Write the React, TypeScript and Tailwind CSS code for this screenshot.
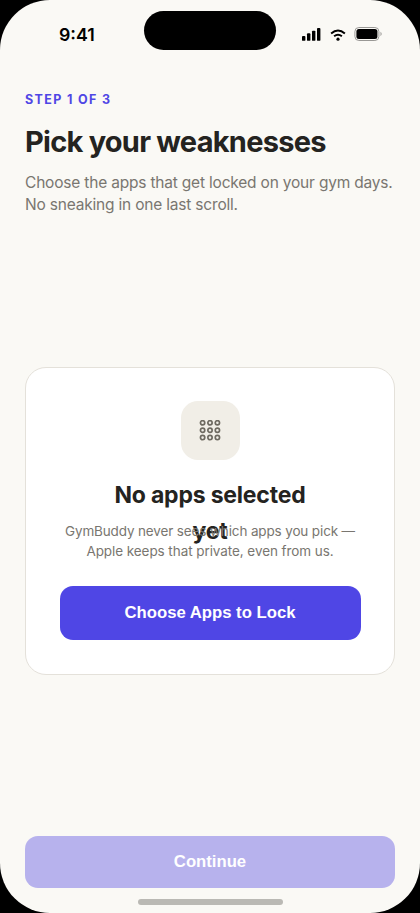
const dots = [2.8, 10.2, 17.6];

function StatusIcons() {
  return (
    <div className="flex h-[14px] items-center" aria-label="Signal, Wi-Fi and battery">
      <svg width="20" height="14" viewBox="0 0 20 14" fill="#000">
        <rect x="0" y="9" width="3.4" height="4.8" rx=".9" />
        <rect x="5" y="6.3" width="3.4" height="7.5" rx=".9" />
        <rect x="10" y="3.7" width="3.4" height="10.1" rx=".9" />
        <rect x="15" y="1" width="3.4" height="12.8" rx=".9" />
      </svg>
      <svg className="ml-[8px]" width="16" height="14" viewBox="0 0 16 14" fill="none" stroke="#000" strokeWidth="1.9">
        <path d="M1.1 6.5Q8 .3 14.9 6.5M4.1 9.3Q8 6.1 11.9 9.3" />
        <circle cx="8" cy="12.2" r="1.6" fill="#000" stroke="none" />
      </svg>
      <svg className="ml-[8px]" width="29" height="14" viewBox="0 0 29 14">
        <rect x=".9" y=".5" width="24" height="13" rx="4" fill="none" stroke="#999895" />
        <rect x="2.4" y="2" width="21" height="10" rx="2.5" fill="#000" />
        <path d="M26.5 4.8q2.4 2.2 0 4.4z" fill="#999895" />
      </svg>
    </div>
  );
}

export default function App() {
  return (
    <div className="h-[913px] w-[420px] overflow-hidden bg-black font-['Inter',sans-serif] text-[#242320]">
      <main className="flex h-full flex-col overflow-hidden rounded-[50px] bg-[#faf9f5]">
        <header className="flex h-[62px] shrink-0 pl-[59px] text-black">
          <time className="mt-[24px] w-[85px] text-[17.75px] leading-[22px] font-semibold">9:41</time>
          <div className="mt-[11px] h-[39px] w-[132px] rounded-full bg-black" />
          <div className="mt-[27px] ml-[26px]"><StatusIcons /></div>
        </header>

        <section className="mt-[30px] h-[124px] shrink-0 pl-[25px]">
          <p className="text-[12.5px] leading-[16px] font-bold tracking-[1.35px] text-[#4f46e5]">STEP 1 OF 3</p>
          <h1 className="mt-[16px] text-[29px] leading-[36px] font-bold tracking-[-0.75px] whitespace-nowrap">Pick your weaknesses</h1>
          <p className="mt-[12px] text-[15.5px] leading-[22px] tracking-[-0.195px] whitespace-nowrap text-[#797670]">
            Choose the apps that get locked on your gym days.<br />No sneaking in one last scroll.
          </p>
        </section>

        <section className="mx-[25px] mt-[151px] flex h-[308px] shrink-0 flex-col items-center rounded-[21px] border border-[#e4e1da] bg-white">
          <div className="mt-[33px] flex h-[59px] w-[59px] shrink-0 items-center justify-center rounded-[17px] bg-[#f1eee7]">
            <svg width="22" height="21" viewBox="-.8 0 22 21" fill="none" stroke="#6e6a61" strokeWidth="1.7">
              {dots.flatMap((y) => dots.map((x) => <circle key={`${x}-${y}`} cx={x} cy={y} r="2.15" />))}
            </svg>
          </div>
          <h2 className="mt-[17px] h-[45px] w-[210px] shrink-0 text-center text-[23px] leading-[36px] font-bold tracking-[-0.2px]">No apps selected yet</h2>
          <p className="relative -mt-px text-center text-[13.5px] leading-[20px] tracking-[-0.14px] whitespace-nowrap text-[#797670]">
            GymBuddy never sees which apps you pick —<br /><span className="tracking-[-0.07px]">Apple keeps that private, even from us.</span>
          </p>
          <button className="mt-[25px] h-[54px] w-[301px] shrink-0 rounded-[13px] bg-[#4f46e5] font-['Liberation_Sans',sans-serif] text-[16.7px] font-bold text-white">Choose Apps to Lock</button>
        </section>

        <footer className="mt-auto flex flex-col items-center pb-[8px]">
          <button className="h-[52px] w-[370px] rounded-[13px] bg-[#b7b2ed] font-['Liberation_Sans',sans-serif] text-[16.7px] font-bold text-white">Continue</button>
          <div className="mt-[11px] h-[6px] w-[145px] rounded-full bg-[#bab9b4]" />
        </footer>
      </main>
    </div>
  );
}
